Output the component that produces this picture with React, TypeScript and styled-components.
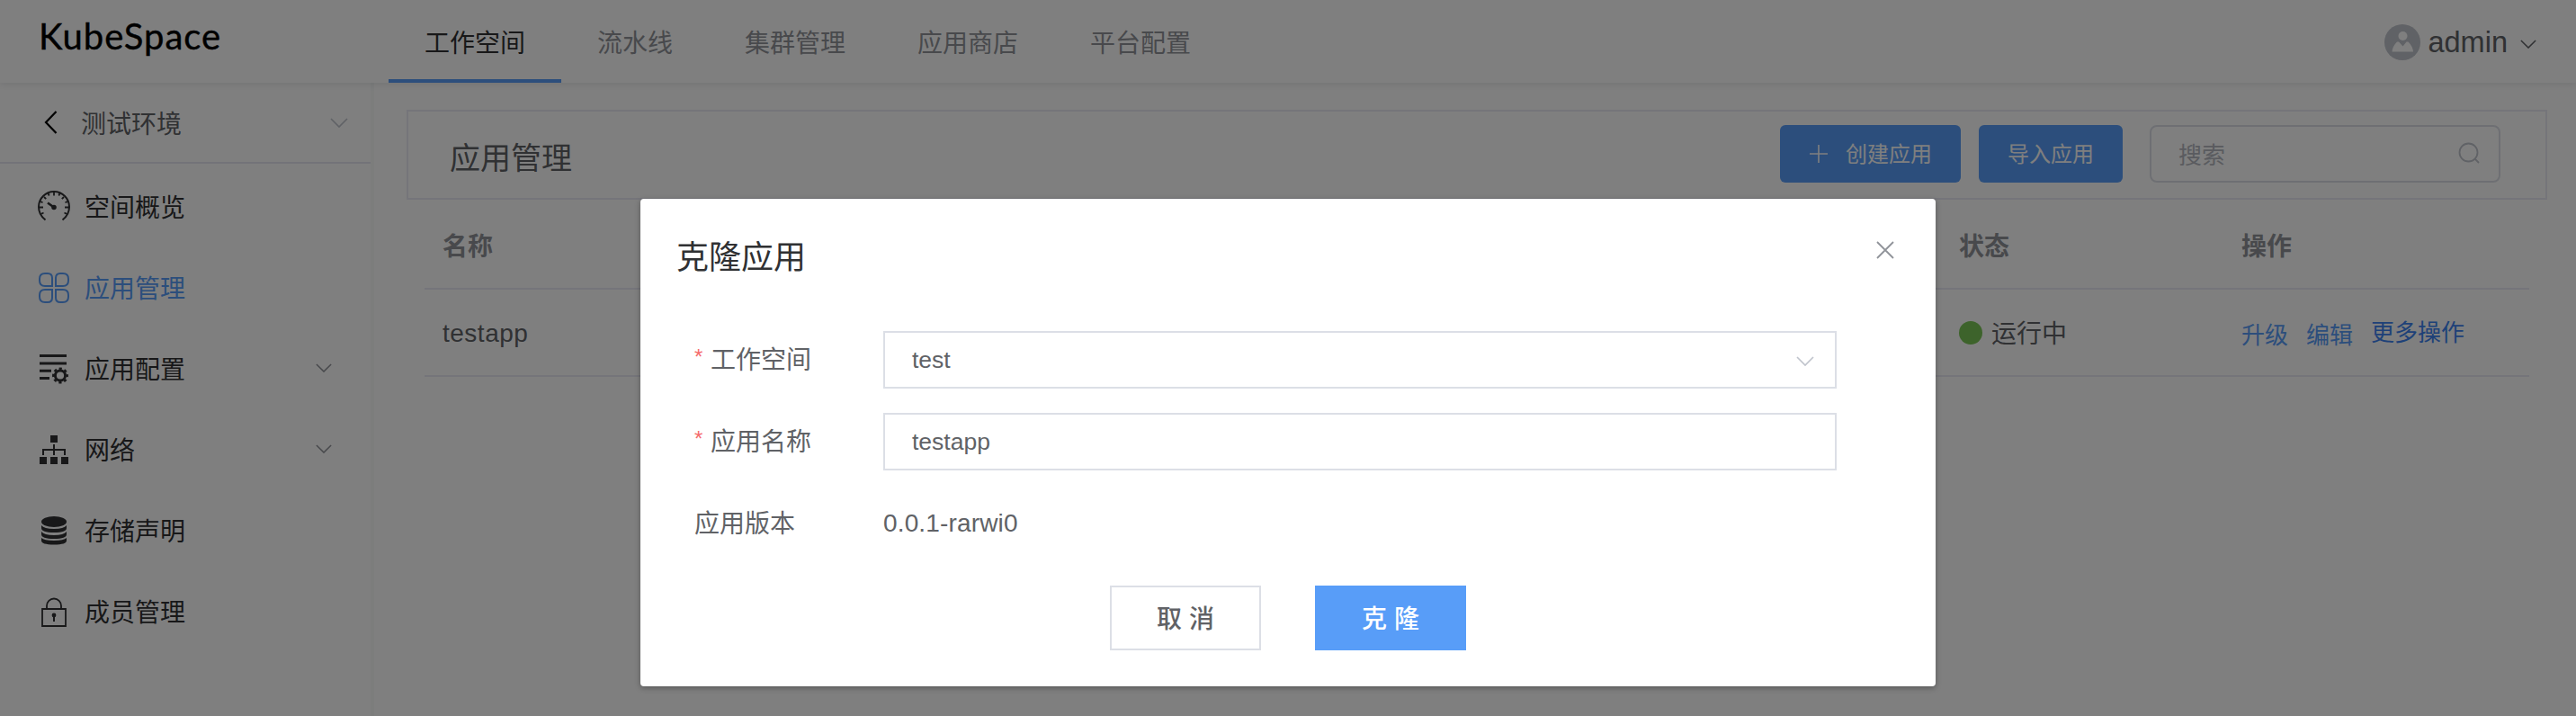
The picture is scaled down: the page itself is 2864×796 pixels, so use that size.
import React from "react";
import styled, { createGlobalStyle } from "styled-components";

const Global = createGlobalStyle`
  *, *::before, *::after { box-sizing: border-box; }
  body {
    margin: 0;
    background: #fff;
    color: #606266;
    font-family: "Liberation Sans", "Noto Sans CJK SC", sans-serif;
    font-size: 28px;
    overflow: hidden;
  }
  button, input { font-family: inherit; }
`;

const Page = styled.div`
  position: relative;
  height: 796px;
  display: flex;
  flex-direction: column;
  overflow: hidden;
`;

const Header = styled.header`
  height: 92px;
  flex: none;
  display: flex;
  z-index: 1;
  background: #fff;
  box-shadow: 0 2px 8px rgba(0, 21, 41, 0.1);
`;

const Logo = styled.div`
  width: 432px;
  padding-left: 43px;
  font: 400 40px/80px Lato, sans-serif;
  letter-spacing: 1px;
  color: #000;
  -webkit-text-stroke: 0.4px #000;
`;

const Tab = styled.a<{ $active?: boolean }>`
  height: 92px;
  padding: 5px 40px 0;
  line-height: 88px;
  color: ${(p) => (p.$active ? "#303133" : "#909399")};
  box-shadow: inset 0 -4px ${(p) => (p.$active ? "#589df8" : "transparent")};
`;

const User = styled.div`
  margin-left: auto;
  margin-right: 44px;
  display: flex;
  align-items: center;
  font-size: 32.5px;
  color: #606266;
  svg:first-child { margin-right: 8px; }
  svg:last-child { margin-left: 14px; margin-top: 3px; }
  padding-top: 2px;
`;

const Body = styled.div`
  flex: 1;
  display: flex;
`;

const Sidebar = styled.aside`
  width: 416px;
  flex: none;
  border-right: 4px solid #f8faf9;
`;

const Env = styled.div`
  height: 90px;
  display: flex;
  align-items: center;
  padding: 0 25px 0 49px;
  border-bottom: 2px solid #e6e6f0;
  span { margin-left: 26px; flex: 1; }
`;

const MenuItem = styled.div<{ $active?: boolean }>`
  height: 90px;
  display: flex;
  align-items: center;
  padding: 0 43px 0 42px;
  color: ${(p) => (p.$active ? "#589df8" : "#303133")};
  span { margin-left: 16px; flex: 1; padding-bottom: 3px; }
  > svg:first-child { flex: none; }
  > svg:last-child { margin-bottom: 2px; }
`;

const Menu = styled.nav`
  padding-top: 3px;
`;

const Main = styled.main`
  flex: 1;
  padding: 30px 32px 0 36px;
`;

const TitleBar = styled.div`
  height: 100px;
  border: 2px solid #ebebf5;
  display: flex;
  align-items: center;
  padding: 0 50px 0 46px;
`;

const Title = styled.h1`
  margin: 7px auto 0 0;
  font-size: 34px;
  line-height: 48px;
  font-weight: 400;
  color: #606266;
`;

const ToolButton = styled.button`
  height: 64px;
  display: flex;
  align-items: center;
  justify-content: center;
  gap: 19px;
  border: 0;
  border-radius: 6px;
  padding: 0 32px 3px;
  margin: -2px 20px 0 0;
  background: #589df8;
  color: #fff;
  font-size: 24px;
  svg { margin-top: 2px; }
`;

const Search = styled.div`
  width: 390px;
  height: 64px;
  margin: -2px 0 0 10px;
  border: 2px solid #dcdfe6;
  border-radius: 8px;
  display: flex;
  align-items: center;
  justify-content: space-between;
  padding: 0 20px 2px 30px;
  font-size: 26px;
  color: #b4b7be;
`;

const Table = styled.div`
  margin: 0 20px;
`;

const Row = styled.div<{ $head?: boolean }>`
  height: ${(p) => (p.$head ? 100 : 97)}px;
  display: grid;
  grid-template-columns: 1686px 314px 1fr;
  align-items: center;
  padding: ${(p) => (p.$head ? 2 : 0)}px 0 0 20px;
  border-bottom: 2px solid #ebebf5;
  font-weight: ${(p) => (p.$head ? 700 : 400)};
  color: ${(p) => (p.$head ? "#909399" : "#606266")};
`;

const Name = styled.div`
  letter-spacing: 0.5px;
  padding-top: 2px;
`;

const Status = styled.div`
  display: flex;
  align-items: center;
  gap: 10px;
  span { padding-bottom: 2px; }
  &::before {
    content: "";
    width: 26px;
    height: 26px;
    border-radius: 50%;
    background: #7ac756;
  }
`;

const Links = styled.div`
  display: flex;
  gap: 20px;
  font-size: 26px;
`;

const LinkText = styled.a<{ $strong?: boolean }>`
  color: ${(p) => (p.$strong ? "#3c82f0" : "#589df8")};
  margin-top: ${(p) => (p.$strong ? -1 : 2)}px;
`;

const Overlay = styled.div`
  position: absolute;
  inset: 0;
  z-index: 2;
  background: rgba(0, 0, 0, 0.5);
  display: flex;
  justify-content: center;
  align-items: flex-start;
  padding-top: 221px;
`;

const Dialog = styled.div`
  width: 1440px;
  height: 542px;
  background: #fff;
  border-radius: 4px;
  box-shadow: 0 2px 6px rgba(0, 0, 0, 0.3);
  padding: 36px 40px 0;
`;

const DialogHead = styled.div`
  height: 52px;
  display: flex;
  justify-content: space-between;
  align-items: center;
  font-size: 36px;
  color: #303133;
  padding-right: 6px;
  svg { margin-top: -10px; }
`;

const Form = styled.div`
  margin: 59px 70px 0 20px;
  display: flex;
  flex-direction: column;
  gap: 27px;
`;

const Field = styled.div`
  height: 64px;
  display: flex;
  align-items: center;
`;

const Label = styled.label<{ $required?: boolean }>`
  width: 210px;
  display: flex;
  padding-bottom: 4px;
  &::before {
    content: "*";
    display: ${(p) => (p.$required ? "block" : "none")};
    width: 18px;
    padding-top: 5px;
    font-size: 24px;
    color: #f56c6c;
  }
`;

const Control = styled.div`
  flex: 1;
  height: 64px;
  border: 2px solid #dcdfe6;
  padding: 0 23px 0 30px;
  display: flex;
  align-items: center;
  justify-content: space-between;
  font-size: 26.5px;
  svg { margin-top: 2px; }
`;

const Version = styled.div`
  letter-spacing: 0.15px;
`;

const Footer = styled.div`
  margin-top: 37px;
  display: flex;
  justify-content: center;
  gap: 60px;
`;

const DialogButton = styled.button<{ $primary?: boolean }>`
  width: 168px;
  height: 72px;
  padding: 0 0 2px;
  font-size: 28px;
  font-weight: 500;
  border: 2px solid ${(p) => (p.$primary ? "#589df8" : "#dcdfe6")};
  background: ${(p) => (p.$primary ? "#589df8" : "#fff")};
  color: ${(p) => (p.$primary ? "#fff" : "#606266")};
`;

const Chevron = ({ color = "#909399", w = 20, h = 11 }) => (
  <svg width={w} height={h} viewBox="0 0 20 11" fill="none">
    <path d="M1 1l9 9 9-9" stroke={color} strokeWidth="1.7" />
  </svg>
);

const Gauge = () => (
  <svg width="36" height="36" viewBox="0 0 36 36" fill="none" stroke="currentColor" strokeWidth="2">
    <path d="M8.5 32.500C4 29 1 24 1 18a17 17 0 0 1 34 0c0 6-3 11-7.500 14.500" />
    <path d="M18 2v3.500M7 7l2.200 2.200M29 7l-2.200 2.200M2 18.500h4M34 18.500h-4M3.500 26l3-1.500M32.500 26l-3-1.500M11.500 3l1.200 2.500M24.500 3l-1.200 2.500M3 12l2.500 1.200M33 12l-2.500 1.200" strokeWidth="1.800" />
    <path d="M11 13.500l7 5" strokeWidth="2.600" />
    <circle cx="18" cy="18.500" r="1.800" fill="currentColor" />
  </svg>
);

const Apps = () => (
  <svg width="36" height="36" viewBox="0 0 36 36" fill="none" stroke="currentColor" strokeWidth="2">
    <path d="M8 2h3q5 0 5 5v9H8q-6 0-6-6V8q0-6 6-6zM28 2h-3q-5 0-5 5v9h8q6 0 6-6V8q0-6-6-6zM8 34h3q5 0 5-5v-9H8q-6 0-6 6v2q0 6 6 6zM28 34h-3q-5 0-5-5v-9h8q6 0 6 6v2q0 6-6 6z" />
  </svg>
);

const Config = () => (
  <svg width="36" height="36" viewBox="0 0 36 36" fill="none" stroke="currentColor">
    <path d="M2 3.500h30M2 12h30M2 20.300h13M2 28.500h11" strokeWidth="3" />
    <circle cx="25" cy="25.500" r="5.600" strokeWidth="3" />
    <circle cx="25" cy="25.500" r="7.700" strokeWidth="2.500" strokeDasharray="3.200 2.848" strokeDashoffset="1.600" />
  </svg>
);

const Network = () => (
  <svg width="36" height="36" viewBox="0 0 36 36" fill="currentColor">
    <path d="M14 2h8v8h-8zM2 26h8v8H2zM14 26h8v8h-8zM26 26h8v8h-8z" />
    <path d="M18 12v12M6 24v-6h24v6" fill="none" stroke="currentColor" strokeWidth="2" />
  </svg>
);

const Storage = () => (
  <svg width="36" height="36" viewBox="0 0 36 36" fill="currentColor">
    <ellipse cx="18" cy="8" rx="14" ry="6" />
    <path d="M4 12q3 4 14 4t14-4v3q0 5-14 5T4 15zM4 19q3 4 14 4t14-4v3q0 5-14 5T4 22zM4 26q3 3 14 3t14-3v3q0 4.500-14 4.500T4 29z" />
  </svg>
);

const Lock = () => (
  <svg width="36" height="36" viewBox="0 0 36 36" fill="none" stroke="currentColor" strokeWidth="1.800">
    <path d="M5 15h26v19H5zM10 15v-3.500a8 8 0 0 1 16 0V15" />
    <path d="M18 22v7" strokeWidth="2" />
    <circle cx="18" cy="22" r="1.500" fill="currentColor" />
  </svg>
);

const MENU = [
  { label: "空间概览", icon: <Gauge /> },
  { label: "应用管理", icon: <Apps />, active: true },
  { label: "应用配置", icon: <Config />, sub: true },
  { label: "网络", icon: <Network />, sub: true },
  { label: "存储声明", icon: <Storage /> },
  { label: "成员管理", icon: <Lock /> },
];

export default function App() {
  return (
    <Page>
      <Global />
      <Header>
        <Logo>KubeSpace</Logo>
        {["工作空间", "流水线", "集群管理", "应用商店", "平台配置"].map((t, i) => (
          <Tab key={t} $active={i === 0}>{t}</Tab>
        ))}
        <User>
          <svg width="40" height="40" viewBox="0 0 40 40">
            <circle cx="20" cy="20" r="20" fill="#c0c4cc" />
            <circle cx="20.500" cy="13" r="5" fill="#fff" />
            <path d="M8.500 30.500q.5-6 5.500-11h2l4.500 5 4-5h2q5 5 5.500 11z" fill="#fff" />
          </svg>
          admin
          <Chevron color="#606266" w={18} h={10} />
        </User>
      </Header>
      <Body>
        <Sidebar>
          <Env>
            <svg width="15" height="26" viewBox="0 0 15 26" fill="none">
              <path d="M13.500 1L2 13l11.500 12" stroke="#000" strokeWidth="2.200" />
            </svg>
            <span>测试环境</span>
            <Chevron color="#c0c4cc" />
          </Env>
          <Menu>
            {MENU.map((m) => (
              <MenuItem key={m.label} $active={m.active}>
                {m.icon}
                <span>{m.label}</span>
                {m.sub && <Chevron w={18} h={10} />}
              </MenuItem>
            ))}
          </Menu>
        </Sidebar>
        <Main>
          <TitleBar>
            <Title>应用管理</Title>
            <ToolButton>
              <svg width="22" height="22" viewBox="0 0 22 22">
                <path d="M11 1v20M1 11h20" stroke="#fff" strokeWidth="1.600" />
              </svg>
              创建应用
            </ToolButton>
            <ToolButton>导入应用</ToolButton>
            <Search>
              搜索
              <svg width="26" height="26" viewBox="0 0 26 26" fill="none" stroke="#c0c4cc" strokeWidth="1.800">
                <circle cx="12.500" cy="12.500" r="10" />
                <path d="M19.500 19.500l4.500 4.500" />
              </svg>
            </Search>
          </TitleBar>
          <Table>
            <Row $head>
              <div>名称</div>
              <div>状态</div>
              <div>操作</div>
            </Row>
            <Row>
              <Name>testapp</Name>
              <Status><span>运行中</span></Status>
              <Links>
                <LinkText>升级</LinkText>
                <LinkText>编辑</LinkText>
                <LinkText $strong>更多操作</LinkText>
              </Links>
            </Row>
          </Table>
        </Main>
      </Body>
      <Overlay>
        <Dialog>
          <DialogHead>
            克隆应用
            <svg width="20" height="20" viewBox="0 0 20 20">
              <path d="M1 1l18 18M19 1L1 19" stroke="#909399" strokeWidth="1.800" />
            </svg>
          </DialogHead>
          <Form>
            <Field>
              <Label $required>工作空间</Label>
              <Control>
                test
                <Chevron color="#c0c4cc" />
              </Control>
            </Field>
            <Field>
              <Label $required>应用名称</Label>
              <Control>testapp</Control>
            </Field>
            <Field>
              <Label>应用版本</Label>
              <Version>0.0.1-rarwi0</Version>
            </Field>
          </Form>
          <Footer>
            <DialogButton>取 消</DialogButton>
            <DialogButton $primary>克 隆</DialogButton>
          </Footer>
        </Dialog>
      </Overlay>
    </Page>
  );
}
